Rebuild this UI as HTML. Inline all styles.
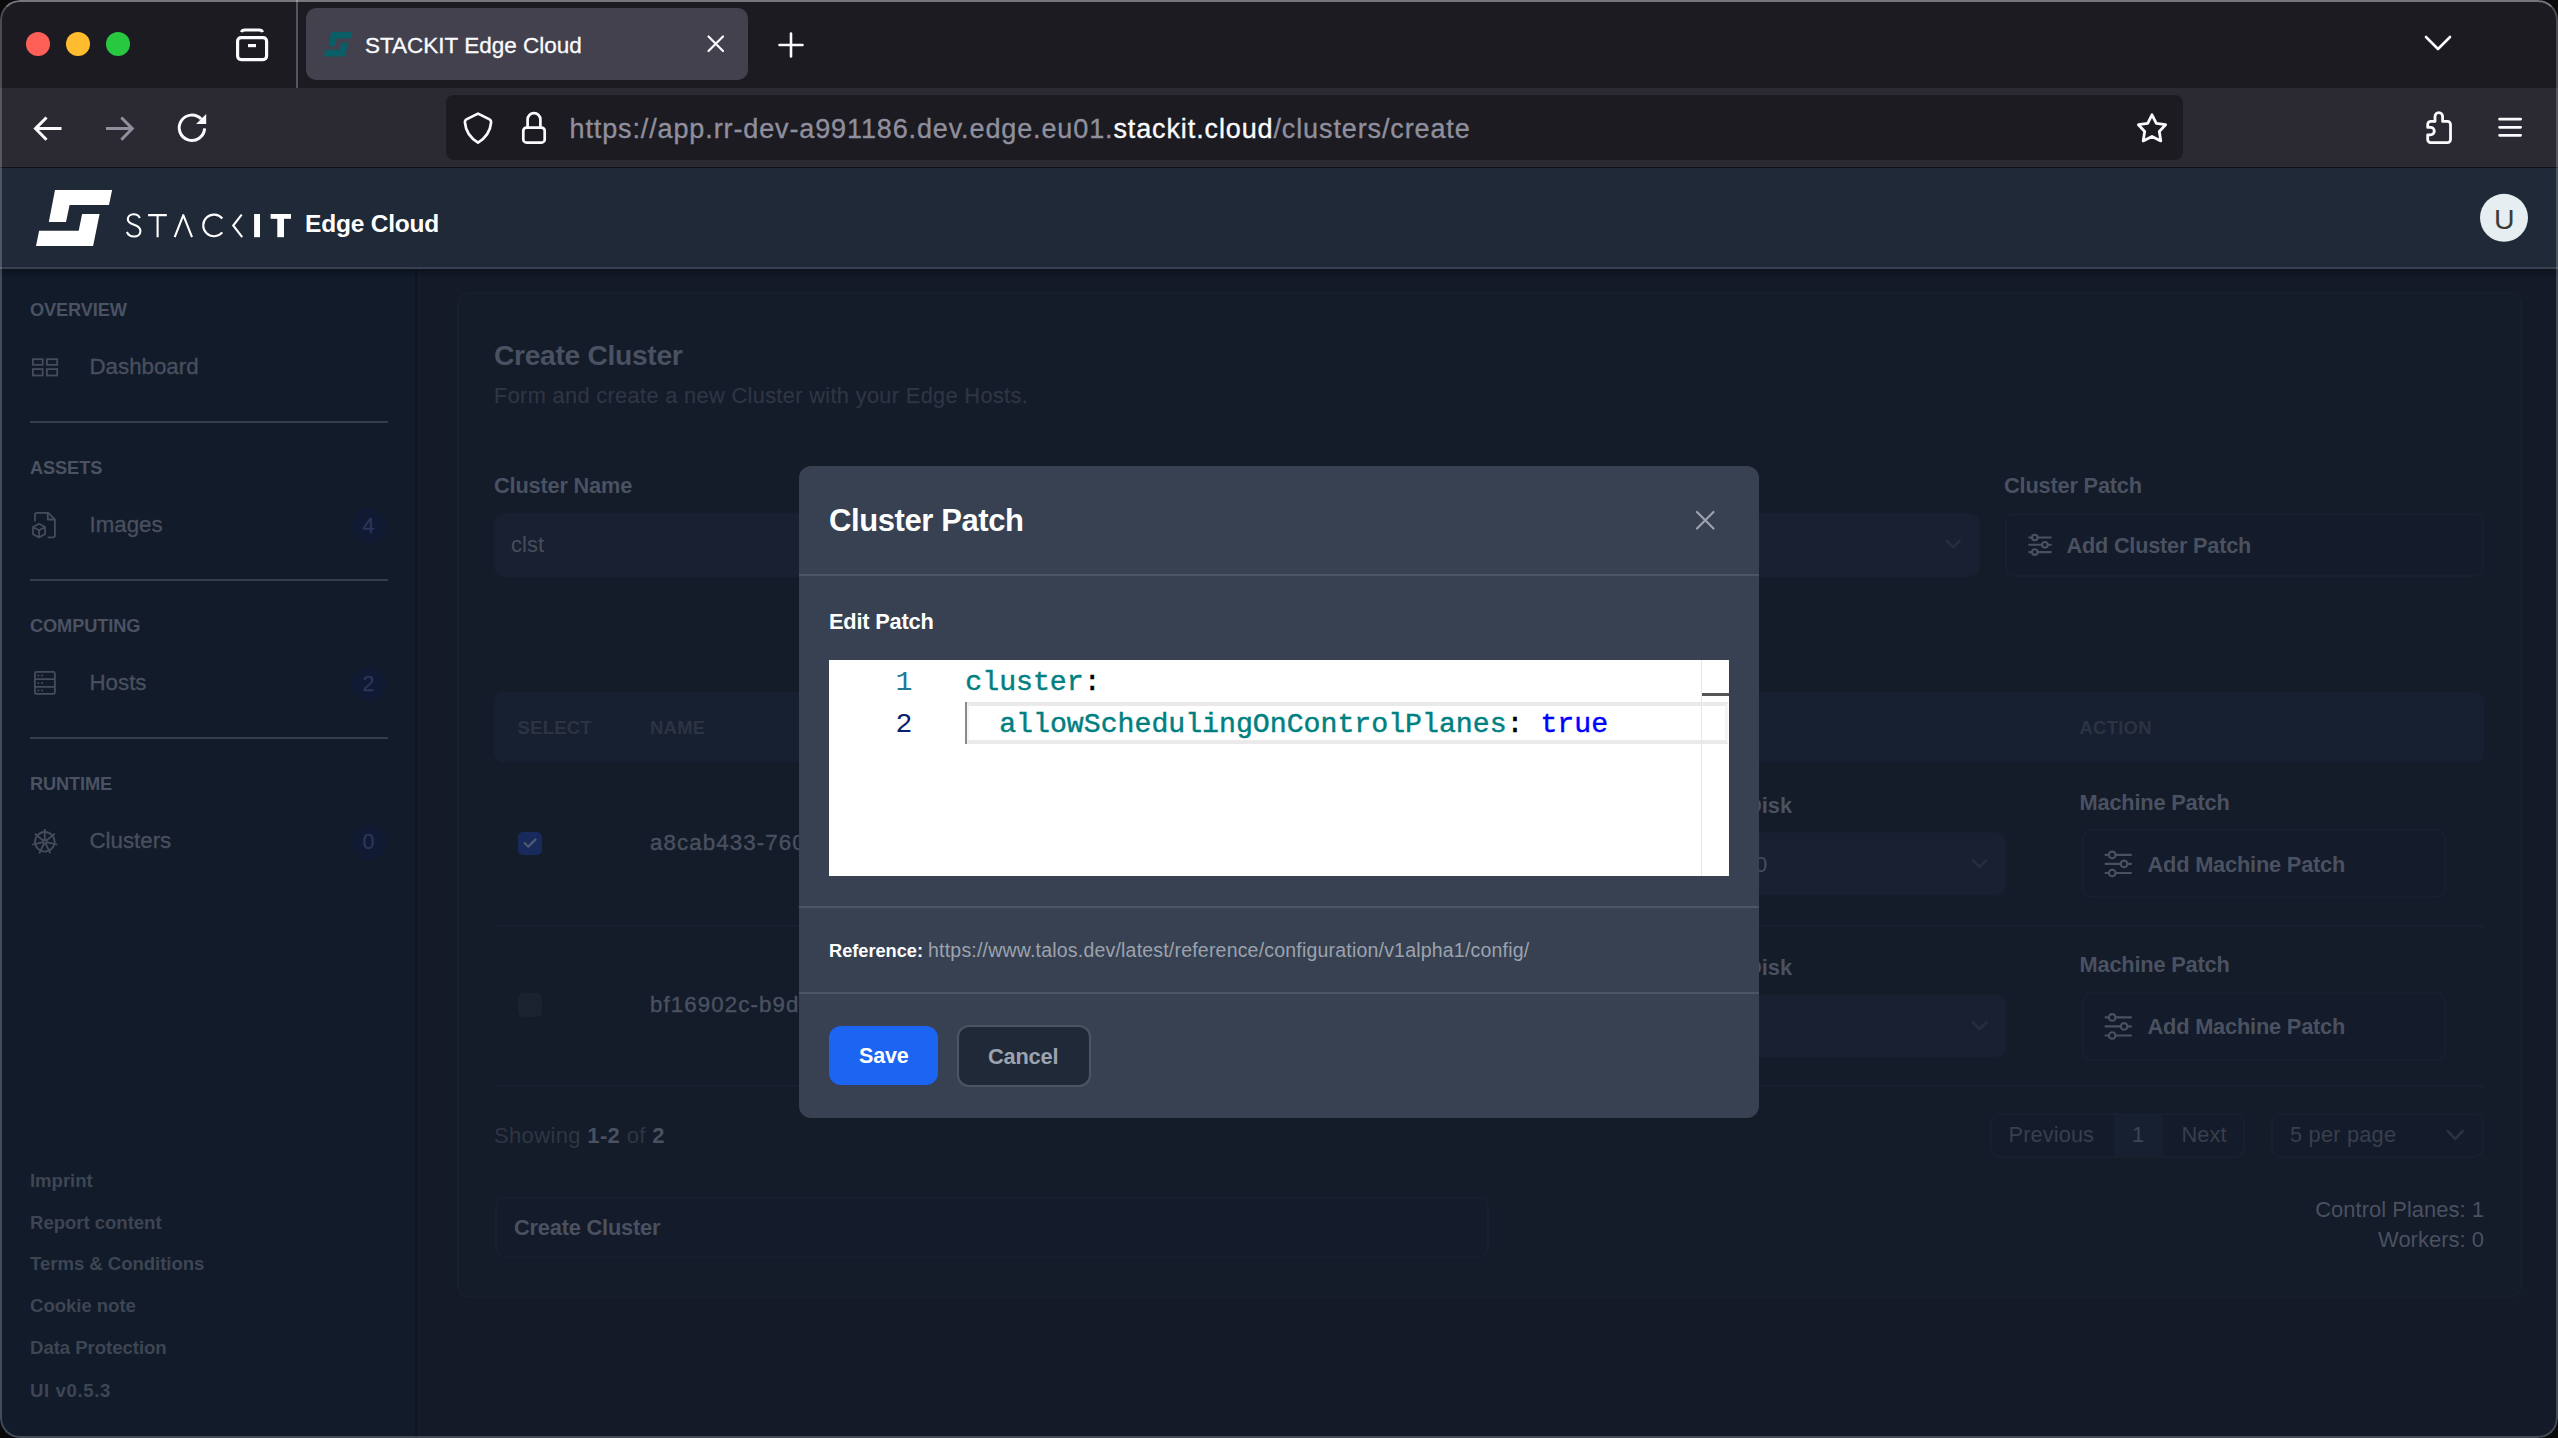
<!DOCTYPE html><html><head><meta charset="utf-8"><style>
*{margin:0;padding:0}
html,body{width:2558px;height:1438px;overflow:hidden;background:#0a0a0a}
#win{position:absolute;left:0;top:0;width:2558px;height:1438px;border-radius:20px;overflow:hidden;background:#111827}
.t{position:absolute;white-space:pre;}
.r{position:absolute}
.s{position:absolute;overflow:visible}
#frame{position:absolute;left:0;top:0;width:2558px;height:1438px;border-radius:20px;box-sizing:border-box;border:2px solid rgba(255,255,255,0.21);border-top-color:rgba(255,255,255,0.4);pointer-events:none}
</style></head><body><div id="win"><div class="r" style="left:0px;top:0px;width:2558px;height:88px;background:#1c1b22;"></div><div class="r" style="left:0px;top:88px;width:2558px;height:80px;background:#2b2a33;"></div><div class="r" style="left:0px;top:167px;width:2558px;height:1px;background:#0f0f14;"></div><svg class="s" style="left:0px;top:0px;" width="160" height="88" viewBox="0 0 160 88"><circle cx="38" cy="44" r="12" fill="#fe5f57"/><circle cx="78" cy="44" r="12" fill="#febc2e"/><circle cx="118" cy="44" r="12" fill="#28c840"/></svg><svg class="s" style="left:220px;top:20px;" width="60" height="50" viewBox="220 20 60 50"><rect x="237.6" y="37.6" width="29" height="22" rx="3.5" fill="none" stroke="#fbfbfe" stroke-width="3.2"/><path d="M241.5 32.2 Q242 30 245 30 L259 30 Q262 30 262.5 32.2" fill="none" stroke="#fbfbfe" stroke-width="3"/><rect x="248" y="44" width="8" height="3.2" fill="#fbfbfe"/></svg><div class="r" style="left:296px;top:0px;width:2px;height:88px;background:#55545c;"></div><div class="r" style="left:306px;top:8px;width:442px;height:72px;background:#42414d;border-radius:10px;"></div><svg class="s" style="left:323.5px;top:31.7px" width="28.5" height="24.5" viewBox="36 189.9 76.1 56.1" preserveAspectRatio="none"><polygon points="55,189.9 112.1,189.9 109,205 69.6,205 66,222 48.8,222" fill="#0a5e66"/><polygon points="82.1,213.9 99.6,213.9 93.1,246 36,246 39.1,230.8 78.7,230.8" fill="#0a5e66"/></svg><div class="t" style="left:365.00px;top:35.35px;font-size:22.5px;line-height:22.5px;color:#fbfbfe;font-weight:400;font-family:'Liberation Sans',sans-serif;-webkit-text-stroke:0.3px currentColor">STACKIT Edge Cloud</div><svg class="s" style="left:700px;top:28px;" width="32" height="32" viewBox="700 28 32 32"><path d="M708.5 36.5 L723 51 M723 36.5 L708.5 51" stroke="#fbfbfe" stroke-width="2.2" stroke-linecap="round"/></svg><svg class="s" style="left:770px;top:25px;" width="40" height="40" viewBox="770 25 40 40"><path d="M791 33.5 V56.5 M779.5 45 H802.5" stroke="#fbfbfe" stroke-width="2.6" stroke-linecap="round"/></svg><svg class="s" style="left:2415px;top:25px;" width="45" height="35" viewBox="2415 25 45 35"><path d="M2426 37 L2438 49 L2450 37" fill="none" stroke="#fbfbfe" stroke-width="2.6" stroke-linecap="round" stroke-linejoin="round"/></svg><svg class="s" style="left:25px;top:105px;" width="200" height="50" viewBox="25 105 200 50"><path d="M35.5 128.6 H61.5 M46.5 117.5 L35.5 128.6 L46.5 139.7" fill="none" stroke="#fbfbfe" stroke-width="3" stroke-linecap="butt" stroke-linejoin="miter"/><path d="M106 128.6 H132 M121.3 117.5 L132.3 128.6 L121.3 139.7" fill="none" stroke="#8f8f9d" stroke-width="3"/><path d="M204.6 128.4 A12.7 12.7 0 1 1 201.2 119.1" fill="none" stroke="#fbfbfe" stroke-width="3"/><polygon points="196.1,124 206.2,124 206.2,114" fill="#fbfbfe"/></svg><div class="r" style="left:446px;top:95px;width:1737px;height:65px;background:#1c1b22;border-radius:8px;"></div><svg class="s" style="left:455px;top:105px;" width="45" height="45" viewBox="455 105 45 45"><path d="M478 113.6 L489.6 119.4 Q491.3 120.3 491.1 122.3 Q490 135.2 478 142.6 Q466 135.2 464.9 122.3 Q464.7 120.3 466.4 119.4 Z" fill="none" stroke="#fbfbfe" stroke-width="2.7" stroke-linejoin="round"/></svg><svg class="s" style="left:515px;top:105px;" width="40" height="45" viewBox="515 105 40 45"><path d="M527.6 127.6 V119.6 A6.4 6.4 0 0 1 540.4 119.6 V127.6" fill="none" stroke="#fbfbfe" stroke-width="2.7"/><rect x="523.3" y="127.6" width="21.4" height="15" rx="3.2" fill="none" stroke="#fbfbfe" stroke-width="2.7"/></svg><div class="t" style="left:569.50px;top:115.74px;font-size:27px;line-height:27px;color:#8f8f9d;font-weight:400;letter-spacing:0.88px;font-family:'Liberation Sans',sans-serif;-webkit-text-stroke:0.35px currentColor"><span style="color:#8f8f9d">https://app.rr-dev-a991186.dev.edge.eu01.</span><span style="color:#fbfbfe">stackit.cloud</span><span style="color:#8f8f9d">/clusters/create</span></div><svg class="s" style="left:2125px;top:100px;" width="55" height="55" viewBox="2125 100 55 55"><path d="M2152 114.8 L2156.3 123.3 L2165.6 124.7 L2159.3 131.5 L2160.8 140.9 L2152 136.5 L2143.2 140.9 L2144.7 131.5 L2138.4 124.7 L2147.7 123.3 Z" fill="none" stroke="#fbfbfe" stroke-width="2.8" stroke-linejoin="round"/></svg><svg class="s" style="left:2415px;top:100px;" width="50" height="55" viewBox="2415 100 50 55"><path d="M2435 121.4 V116.5 A3.8 3.8 0 0 1 2442.6 116.5 V121.4 H2447.5 A3 3 0 0 1 2450.5 124.4 V139.6 A3 3 0 0 1 2447.5 142.6 H2430.7 A3 3 0 0 1 2427.7 139.6 V134.8 H2430.6 A3.7 3.7 0 0 0 2430.6 127.4 H2427.7 V124.4 A3 3 0 0 1 2430.7 121.4 Z" fill="none" stroke="#fbfbfe" stroke-width="2.8" stroke-linejoin="round"/></svg><svg class="s" style="left:2490px;top:105px;" width="40" height="45" viewBox="2490 105 40 45"><path d="M2499.6 119.2 H2520.6 M2499.6 127.3 H2520.6 M2499.6 135.3 H2520.6" stroke="#fbfbfe" stroke-width="2.8" stroke-linecap="round"/></svg><div class="r" style="left:0px;top:168px;width:2558px;height:99px;background:#1f2937;"></div><div class="r" style="left:0px;top:267px;width:2558px;height:2px;background:#374151;"></div><svg class="s" style="left:30px;top:185px;" width="90" height="65" viewBox="30 185 90 65"><polygon points="55,189.9 112.1,189.9 109,205 69.6,205 66,222 48.8,222" fill="#ffffff"/><polygon points="82.1,213.9 99.6,213.9 93.1,246 36,246 39.1,230.8 78.7,230.8" fill="#ffffff"/></svg><svg class="s" style="left:120px;top:205px;" width="180" height="40" viewBox="120 205 180 40"><g fill="none" stroke="#ffffff" stroke-width="2.1"><path d="M139.8 218 C138.5 215 136 214.3 133.6 214.3 C130 214.3 127.8 216.5 127.8 219.3 C127.8 222.6 130.8 223.8 134 224.8 C137.6 225.9 140.4 227.3 140.4 231.2 C140.4 234.5 137.6 236.5 133.9 236.5 C130.8 236.5 128.2 235 126.9 232"/><path d="M148.1 215.1 H166.8 M157.6 215.1 V237.2"/><path d="M174.7 237.2 L183.3 215.2 L192 237.2" stroke-linejoin="round"/><path d="M222.3 218.5 A10.8 10.8 0 1 0 222.3 232.4"/><path d="M241.7 214.6 L233.2 225.5 L242.2 237.1"/></g><rect x="254.1" y="214" width="5.9" height="23.2" fill="#ffffff"/><rect x="270.6" y="214" width="20.4" height="4.8" fill="#ffffff"/><rect x="277.3" y="214" width="6.7" height="23.2" fill="#ffffff"/></svg><div class="t" style="left:305.00px;top:212.06px;font-size:24.5px;line-height:24.5px;color:#ffffff;font-weight:700;letter-spacing:-0.2px;font-family:'Liberation Sans',sans-serif;">Edge Cloud</div><svg class="s" style="left:2470px;top:185px;" width="70" height="70" viewBox="2470 185 70 70"><circle cx="2504" cy="217.8" r="24" fill="#e6eef1"/></svg><div class="t" style="left:2494.00px;top:205.27px;font-size:28.5px;line-height:28.5px;color:#3b3b3b;font-weight:400;font-family:'Liberation Sans',sans-serif;">U</div><div class="r" style="left:0px;top:269px;width:418px;height:1169px;background:#111b2a;"></div><div class="r" style="left:415px;top:269px;width:3px;height:1169px;background:#0f1723;"></div><div class="r" style="left:418px;top:269px;width:2px;height:1169px;background:#161d2a;"></div><div class="t" style="left:30.00px;top:300.69px;font-size:18.2px;line-height:18.2px;color:#4b5262;font-weight:700;letter-spacing:-0.1px;font-family:'Liberation Sans',sans-serif;">OVERVIEW</div><div class="t" style="left:30.00px;top:459.09px;font-size:18.2px;line-height:18.2px;color:#4b5262;font-weight:700;letter-spacing:-0.1px;font-family:'Liberation Sans',sans-serif;">ASSETS</div><div class="t" style="left:30.00px;top:616.79px;font-size:18.2px;line-height:18.2px;color:#4b5262;font-weight:700;letter-spacing:-0.1px;font-family:'Liberation Sans',sans-serif;">COMPUTING</div><div class="t" style="left:30.00px;top:774.79px;font-size:18.2px;line-height:18.2px;color:#4b5262;font-weight:700;letter-spacing:-0.1px;font-family:'Liberation Sans',sans-serif;">RUNTIME</div><div class="t" style="left:89.50px;top:356.12px;font-size:22.3px;line-height:22.3px;color:#494f5d;font-weight:400;font-family:'Liberation Sans',sans-serif;-webkit-text-stroke:0.35px currentColor">Dashboard</div><div class="t" style="left:89.50px;top:513.62px;font-size:22.3px;line-height:22.3px;color:#494f5d;font-weight:400;font-family:'Liberation Sans',sans-serif;-webkit-text-stroke:0.35px currentColor">Images</div><div class="t" style="left:89.50px;top:671.62px;font-size:22.3px;line-height:22.3px;color:#494f5d;font-weight:400;font-family:'Liberation Sans',sans-serif;-webkit-text-stroke:0.35px currentColor">Hosts</div><div class="t" style="left:89.50px;top:829.62px;font-size:22.3px;line-height:22.3px;color:#494f5d;font-weight:400;font-family:'Liberation Sans',sans-serif;-webkit-text-stroke:0.35px currentColor">Clusters</div><div class="r" style="left:30px;top:421px;width:358px;height:2px;background:#353c4a;"></div><div class="r" style="left:30px;top:579px;width:358px;height:2px;background:#353c4a;"></div><div class="r" style="left:30px;top:737px;width:358px;height:2px;background:#353c4a;"></div><svg class="s" style="left:345px;top:501px;" width="50" height="50" viewBox="345 501 50 50"><circle cx="369" cy="526" r="17.5" fill="#111a33"/></svg><div class="t" style="left:362.50px;top:515.60px;font-size:21.5px;line-height:21.5px;color:#2a375a;font-weight:400;font-family:'Liberation Sans',sans-serif;-webkit-text-stroke:0.3px currentColor">4</div><svg class="s" style="left:345px;top:659px;" width="50" height="50" viewBox="345 659 50 50"><circle cx="369" cy="684" r="17.5" fill="#111a33"/></svg><div class="t" style="left:362.50px;top:673.60px;font-size:21.5px;line-height:21.5px;color:#2a375a;font-weight:400;font-family:'Liberation Sans',sans-serif;-webkit-text-stroke:0.3px currentColor">2</div><svg class="s" style="left:345px;top:817px;" width="50" height="50" viewBox="345 817 50 50"><circle cx="369" cy="842" r="17.5" fill="#111a33"/></svg><div class="t" style="left:362.50px;top:831.60px;font-size:21.5px;line-height:21.5px;color:#2a375a;font-weight:400;font-family:'Liberation Sans',sans-serif;-webkit-text-stroke:0.3px currentColor">0</div><svg class="s" style="left:25px;top:350px;" width="45" height="35" viewBox="25 350 45 35"><g stroke="#454c5a" stroke-width="1.8" fill="none"><rect x="32.9" y="359.2" width="9.8" height="5.6"/><rect x="46.9" y="359.2" width="10.3" height="5.6"/><rect x="32.9" y="369.1" width="9.8" height="6.4"/><rect x="46.9" y="369.1" width="10.3" height="6.4"/></g></svg><svg class="s" style="left:25px;top:505px;" width="40" height="40" viewBox="25 505 40 40"><g stroke="#454c5a" stroke-width="1.8" fill="none" stroke-linejoin="round"><path d="M35 521.5 V514.5 Q35 512.8 36.7 512.8 H48.3 L54.9 519.5 V535.6 Q54.9 537.3 53.2 537.3 H47.6"/><path d="M47.8 512.8 V519.5 H54.9"/><path d="M39 523.8 L45 527 V534.2 L39 537.4 L33 534.2 V527 Z M33 527 L39 530.2 L45 527 M39 530.2 V537.4"/></g></svg><svg class="s" style="left:25px;top:660px;" width="40" height="45" viewBox="25 660 40 45"><g stroke="#454c5a" stroke-width="1.8" fill="none"><rect x="34.9" y="671.9" width="20" height="22" rx="2"/><path d="M34.9 679.2 H54.9 M34.9 686.9 H54.9"/></g><g fill="#454c5a"><circle cx="38.4" cy="675.5" r="1"/><circle cx="42" cy="675.5" r="1"/><circle cx="38.4" cy="683" r="1"/><circle cx="42" cy="683" r="1"/><circle cx="38.4" cy="690.5" r="1"/><circle cx="42" cy="690.5" r="1"/></g></svg><svg class="s" style="left:25px;top:820px;" width="40" height="45" viewBox="25 820 40 45"><g stroke="#454c5a" stroke-width="1.8" fill="none"><circle cx="44.8" cy="841.8" r="9.8"/><circle cx="44.8" cy="841.8" r="1.8"/><path d="M44.80 840.20 L44.80 829.00 M46.05 840.80 L54.81 833.82 M46.36 842.16 L57.28 844.65 M45.49 843.24 L50.35 853.33 M44.11 843.24 L39.25 853.33 M43.24 842.16 L32.32 844.65 M43.55 840.80 L34.79 833.82 "/></g></svg><div class="t" style="left:30.00px;top:1171.65px;font-size:18.6px;line-height:18.6px;color:#3e4553;font-weight:700;letter-spacing:-0.05px;font-family:'Liberation Sans',sans-serif;">Imprint</div><div class="t" style="left:30.00px;top:1213.55px;font-size:18.6px;line-height:18.6px;color:#3e4553;font-weight:700;letter-spacing:-0.05px;font-family:'Liberation Sans',sans-serif;">Report content</div><div class="t" style="left:30.00px;top:1255.25px;font-size:18.6px;line-height:18.6px;color:#3e4553;font-weight:700;letter-spacing:-0.05px;font-family:'Liberation Sans',sans-serif;">Terms &amp; Conditions</div><div class="t" style="left:30.00px;top:1296.95px;font-size:18.6px;line-height:18.6px;color:#3e4553;font-weight:700;letter-spacing:-0.05px;font-family:'Liberation Sans',sans-serif;">Cookie note</div><div class="t" style="left:30.00px;top:1339.25px;font-size:18.6px;line-height:18.6px;color:#3e4553;font-weight:700;letter-spacing:-0.05px;font-family:'Liberation Sans',sans-serif;">Data Protection</div><div class="t" style="left:30.00px;top:1381.65px;font-size:18.6px;line-height:18.6px;color:#3e4553;font-weight:700;letter-spacing:0.6px;font-family:'Liberation Sans',sans-serif;">UI v0.5.3</div><div class="r" style="left:420px;top:269px;width:2138px;height:1169px;background:#141a28;"></div><div class="r" style="left:457px;top:292px;width:2065px;height:1006px;background:#141b29;border-radius:12px;border:2px solid #171e2c;box-sizing:border-box;"></div><div class="t" style="left:494.00px;top:341.12px;font-size:28.2px;line-height:28.2px;color:#4a5161;font-weight:700;letter-spacing:-0.3px;font-family:'Liberation Sans',sans-serif;">Create Cluster</div><div class="t" style="left:494.00px;top:385.24px;font-size:21.8px;line-height:21.8px;color:#2f3543;font-weight:400;letter-spacing:0.33px;font-family:'Liberation Sans',sans-serif;-webkit-text-stroke:0.25px currentColor">Form and create a new Cluster with your Edge Hosts.</div><div class="t" style="left:494.00px;top:475.44px;font-size:21.8px;line-height:21.8px;color:#4a5161;font-weight:700;letter-spacing:-0.2px;font-family:'Liberation Sans',sans-serif;">Cluster Name</div><div class="r" style="left:494px;top:513px;width:406px;height:64px;background:#182031;border-radius:10px;border:2px solid #182030;box-sizing:border-box;"></div><div class="t" style="left:511.00px;top:534.37px;font-size:22px;line-height:22px;color:#474e5b;font-weight:400;font-family:'Liberation Sans',sans-serif;">clst</div><div class="r" style="left:1700px;top:513px;width:280px;height:64px;background:#182031;border-radius:10px;border:2px solid #182030;box-sizing:border-box;"></div><svg class="s" style="left:1940px;top:531px;" width="26" height="26" viewBox="1940 531 26 26"><path d="M1946.8 540.8 L1953.3 547.2 L1959.8 540.8" fill="none" stroke="#262e3c" stroke-width="2.6" stroke-linecap="round" stroke-linejoin="round"/></svg><div class="t" style="left:2004.00px;top:475.24px;font-size:21.8px;line-height:21.8px;color:#4a5161;font-weight:700;letter-spacing:-0.2px;font-family:'Liberation Sans',sans-serif;">Cluster Patch</div><div class="r" style="left:2005px;top:513px;width:479px;height:64px;background:#141b2a;border-radius:10px;border:2px solid #182030;box-sizing:border-box;"></div><svg class="s" style="left:2024px;top:530px;" width="30" height="29" viewBox="2024 530 30 29"><g fill="none" stroke="#4a5160" stroke-width="2.1" stroke-linecap="round"><path d="M2029.2 537.5 H2032.0 M2037.6 537.5 H2050.8" /><circle cx="2034.8" cy="537.5" r="2.8"/><path d="M2029.2 544.8 H2042.1 M2047.7 544.8 H2050.8" /><circle cx="2044.9" cy="544.8" r="2.8"/><path d="M2029.2 552.1 H2032.0 M2037.6 552.1 H2050.8" /><circle cx="2034.8" cy="552.1" r="2.8"/></g></svg><div class="t" style="left:2066.50px;top:535.03px;font-size:21.7px;line-height:21.7px;color:#4a5160;font-weight:700;letter-spacing:-0.2px;font-family:'Liberation Sans',sans-serif;">Add Cluster Patch</div><div class="r" style="left:494px;top:692px;width:1990px;height:70px;background:#172031;border-radius:8px;"></div><div class="t" style="left:517.50px;top:718.72px;font-size:18.4px;line-height:18.4px;color:#2c3341;font-weight:700;letter-spacing:0.3px;font-family:'Liberation Sans',sans-serif;">SELECT</div><div class="t" style="left:650.00px;top:718.72px;font-size:18.4px;line-height:18.4px;color:#2c3341;font-weight:700;letter-spacing:0.3px;font-family:'Liberation Sans',sans-serif;">NAME</div><div class="t" style="left:2079.50px;top:718.72px;font-size:18.4px;line-height:18.4px;color:#2c3341;font-weight:700;letter-spacing:0.3px;font-family:'Liberation Sans',sans-serif;">ACTION</div><div class="r" style="left:494px;top:925px;width:1990px;height:2px;background:#182030;"></div><div class="r" style="left:494px;top:1085px;width:1990px;height:2px;background:#182030;"></div><div class="r" style="left:518px;top:831.5px;width:24px;height:23.0px;background:#182a5c;border-radius:5px;"></div><svg class="s" style="left:518px;top:831px;" width="24" height="24" viewBox="518 831 24 24"><path d="M524.5 843 L528.3 846.6 L535.5 839.4" fill="none" stroke="#4d5970" stroke-width="2.2" stroke-linecap="round" stroke-linejoin="round"/></svg><div class="t" style="left:650.00px;top:831.72px;font-size:22.3px;line-height:22.3px;color:#4a5160;font-weight:400;letter-spacing:1.1px;font-family:'Liberation Sans',sans-serif;-webkit-text-stroke:0.4px currentColor">a8cab433-7605-4d2e-9b1a</div><div class="t" style="left:1746.00px;top:794.74px;font-size:21.8px;line-height:21.8px;color:#4a5161;font-weight:700;font-family:'Liberation Sans',sans-serif;">Disk</div><div class="r" style="left:1700px;top:832px;width:307px;height:63px;background:#182031;border-radius:10px;border:2px solid #182030;box-sizing:border-box;"></div><div class="t" style="left:1755.00px;top:854.37px;font-size:22px;line-height:22px;color:#474e5b;font-weight:400;font-family:'Liberation Sans',sans-serif;">0</div><svg class="s" style="left:1966px;top:850px;" width="27" height="27" viewBox="1966 850 27 27"><path d="M1972.8 860.2 L1979.6 867.0 L1986.3 860.2" fill="none" stroke="#262e3c" stroke-width="2.6" stroke-linecap="round" stroke-linejoin="round"/></svg><div class="t" style="left:2079.50px;top:792.44px;font-size:21.8px;line-height:21.8px;color:#4a5161;font-weight:700;letter-spacing:-0.2px;font-family:'Liberation Sans',sans-serif;">Machine Patch</div><div class="r" style="left:2082px;top:829px;width:364px;height:69px;background:#141b2a;border-radius:10px;border:2px solid #182030;box-sizing:border-box;"></div><svg class="s" style="left:2101px;top:846px;" width="34" height="35" viewBox="2101 846 34 35"><g fill="none" stroke="#4a5160" stroke-width="2.1" stroke-linecap="round"><path d="M2105.5 854.9 H2108.8 M2115.5 854.9 H2131.0" /><circle cx="2112.2" cy="854.9" r="3.3"/><path d="M2105.5 863.9 H2120.8 M2127.4 863.9 H2131.0" /><circle cx="2124.1" cy="863.9" r="3.3"/><path d="M2105.5 873.0 H2108.8 M2115.5 873.0 H2131.0" /><circle cx="2112.2" cy="873.0" r="3.3"/></g></svg><div class="t" style="left:2147.50px;top:853.64px;font-size:21.8px;line-height:21.8px;color:#4a5160;font-weight:700;letter-spacing:-0.2px;font-family:'Liberation Sans',sans-serif;">Add Machine Patch</div><div class="r" style="left:518px;top:993px;width:24px;height:23.5px;background:#1a2230;border-radius:5px;"></div><div class="t" style="left:650.00px;top:994.32px;font-size:22.3px;line-height:22.3px;color:#4a5160;font-weight:400;letter-spacing:1.1px;font-family:'Liberation Sans',sans-serif;-webkit-text-stroke:0.4px currentColor">bf16902c-b9d4-4e7a-8c21</div><div class="t" style="left:1746.00px;top:956.74px;font-size:21.8px;line-height:21.8px;color:#4a5161;font-weight:700;font-family:'Liberation Sans',sans-serif;">Disk</div><div class="r" style="left:1700px;top:994px;width:307px;height:63px;background:#182031;border-radius:10px;border:2px solid #182030;box-sizing:border-box;"></div><svg class="s" style="left:1966px;top:1012px;" width="27" height="27" viewBox="1966 1012 27 27"><path d="M1972.8 1022.2 L1979.6 1029.0 L1986.3 1022.2" fill="none" stroke="#262e3c" stroke-width="2.6" stroke-linecap="round" stroke-linejoin="round"/></svg><div class="t" style="left:2079.50px;top:953.54px;font-size:21.8px;line-height:21.8px;color:#4a5161;font-weight:700;letter-spacing:-0.2px;font-family:'Liberation Sans',sans-serif;">Machine Patch</div><div class="r" style="left:2082px;top:992px;width:364px;height:69px;background:#141b2a;border-radius:10px;border:2px solid #182030;box-sizing:border-box;"></div><svg class="s" style="left:2101px;top:1009px;" width="34" height="35" viewBox="2101 1009 34 35"><g fill="none" stroke="#4a5160" stroke-width="2.1" stroke-linecap="round"><path d="M2105.5 1017.4 H2108.8 M2115.5 1017.4 H2131.0" /><circle cx="2112.2" cy="1017.4" r="3.3"/><path d="M2105.5 1026.4 H2120.8 M2127.4 1026.4 H2131.0" /><circle cx="2124.1" cy="1026.4" r="3.3"/><path d="M2105.5 1035.5 H2108.8 M2115.5 1035.5 H2131.0" /><circle cx="2112.2" cy="1035.5" r="3.3"/></g></svg><div class="t" style="left:2147.50px;top:1016.04px;font-size:21.8px;line-height:21.8px;color:#4a5160;font-weight:700;letter-spacing:-0.2px;font-family:'Liberation Sans',sans-serif;">Add Machine Patch</div><div class="t" style="left:494.00px;top:1124.97px;font-size:22px;line-height:22px;color:#2f3643;font-weight:400;letter-spacing:0.35px;font-family:'Liberation Sans',sans-serif;"><span>Showing </span><b style="color:#4a5160">1-2</b><span> of </span><b style="color:#4a5160">2</b></div><div class="r" style="left:1990px;top:1113px;width:255px;height:45px;background:#141b2a;border-radius:10px;border:2px solid #182030;box-sizing:border-box;"></div><div class="r" style="left:2114px;top:1115px;width:49px;height:41px;background:#172031;"></div><div class="t" style="left:2008.50px;top:1124.24px;font-size:21.8px;line-height:21.8px;color:#383f4d;font-weight:400;letter-spacing:0.1px;font-family:'Liberation Sans',sans-serif;">Previous</div><div class="t" style="left:2132.00px;top:1124.24px;font-size:21.8px;line-height:21.8px;color:#3f4654;font-weight:400;font-family:'Liberation Sans',sans-serif;">1</div><div class="t" style="left:2181.50px;top:1124.24px;font-size:21.8px;line-height:21.8px;color:#383f4d;font-weight:400;letter-spacing:0.1px;font-family:'Liberation Sans',sans-serif;">Next</div><div class="r" style="left:2271px;top:1113px;width:213px;height:45px;background:#141b2a;border-radius:10px;border:2px solid #182030;box-sizing:border-box;"></div><div class="t" style="left:2290.00px;top:1124.24px;font-size:21.8px;line-height:21.8px;color:#383f4d;font-weight:400;letter-spacing:0.2px;font-family:'Liberation Sans',sans-serif;">5 per page</div><svg class="s" style="left:2440px;top:1120px;" width="30" height="30" viewBox="2440 1120 30 30"><path d="M2447.7 1131.2 L2455.2 1138.8 L2462.7 1131.2" fill="none" stroke="#2c3442" stroke-width="2.6" stroke-linecap="round" stroke-linejoin="round"/></svg><div class="r" style="left:495px;top:1197px;width:994px;height:61px;background:#141b2a;border-radius:10px;border:2px solid #182030;box-sizing:border-box;"></div><div class="t" style="left:514.00px;top:1216.94px;font-size:21.8px;line-height:21.8px;color:#4a5160;font-weight:700;letter-spacing:-0.2px;font-family:'Liberation Sans',sans-serif;">Create Cluster</div><div class="t" style="left:2314.00px;top:1199.36px;font-size:21.9px;line-height:21.9px;color:#4a5160;font-weight:400;letter-spacing:0.05px;font-family:'Liberation Sans',sans-serif;width:170px;text-align:right">Control Planes: 1</div><div class="t" style="left:2314.00px;top:1229.46px;font-size:21.9px;line-height:21.9px;color:#4a5160;font-weight:400;letter-spacing:0.05px;font-family:'Liberation Sans',sans-serif;width:170px;text-align:right">Workers: 0</div><div class="r" style="left:0;top:269px;width:2558px;height:10px;background:linear-gradient(rgba(0,0,0,0.28),rgba(0,0,0,0))"></div><div class="r" style="left:799px;top:466px;width:960px;height:652px;background:#374151;border-radius:12px;"></div><div class="t" style="left:829.00px;top:504.95px;font-size:31px;line-height:31px;color:#ffffff;font-weight:700;letter-spacing:-0.4px;font-family:'Liberation Sans',sans-serif;">Cluster Patch</div><svg class="s" style="left:1690px;top:505px;" width="30" height="30" viewBox="1690 505 30 30"><path d="M1697 512 L1713.5 528.5 M1713.5 512 L1697 528.5" stroke="#9ca3af" stroke-width="2.2" stroke-linecap="round"/></svg><div class="r" style="left:799px;top:574px;width:960px;height:2px;background:#4b5563;"></div><div class="t" style="left:829.00px;top:610.54px;font-size:21.8px;line-height:21.8px;color:#ffffff;font-weight:700;letter-spacing:-0.2px;font-family:'Liberation Sans',sans-serif;">Edit Patch</div><div class="r" style="left:829px;top:660px;width:900px;height:216px;background:#ffffff;"></div><div class="r" style="left:966px;top:702px;width:762px;height:42px;background:transparent;border:4px solid #eaeaea;box-sizing:border-box;border-left:3px solid #f4f4f4;border-right:3px solid #f4f4f4"></div><div class="r" style="left:965px;top:702px;width:2px;height:42px;background:#8a8a8a;"></div><div class="r" style="left:1701px;top:660px;width:1px;height:216px;background:#e8e8e8;"></div><div class="r" style="left:1702px;top:693px;width:27px;height:3px;background:#555555;"></div><div class="t" style="left:895.50px;top:669.40px;font-size:28.2px;line-height:28.2px;color:#237893;font-weight:400;font-family:'Liberation Mono',sans-serif;">1</div><div class="t" style="left:895.50px;top:711.40px;font-size:28.2px;line-height:28.2px;color:#0b216f;font-weight:400;font-family:'Liberation Mono',sans-serif;">2</div><div class="t" style="left:965.30px;top:669.40px;font-size:28.2px;line-height:28.2px;color:#008080;font-weight:400;font-family:'Liberation Mono',sans-serif;white-space:pre;-webkit-text-stroke:0.45px currentColor"><span style="color:#008080">cluster</span><span style="color:#000">:</span></div><div class="t" style="left:965.30px;top:711.40px;font-size:28.2px;line-height:28.2px;color:#008080;font-weight:400;font-family:'Liberation Mono',sans-serif;white-space:pre;-webkit-text-stroke:0.45px currentColor"><span>  </span><span style="color:#008080">allowSchedulingOnControlPlanes</span><span style="color:#000">: </span><span style="color:#0000ff">true</span></div><div class="r" style="left:799px;top:906px;width:960px;height:2px;background:#4b5563;"></div><div class="t" style="left:829.00px;top:941.39px;font-size:18.2px;line-height:18.2px;color:#fff;font-weight:700;font-family:'Liberation Sans',sans-serif;"><b style="color:#fff">Reference:</b> <span style="color:#9ca3af;font-weight:400;letter-spacing:0.2px;font-size:19.5px">https://www.talos.dev/latest/reference/configuration/v1alpha1/config/</span></div><div class="r" style="left:799px;top:992px;width:960px;height:2px;background:#4b5563;"></div><div class="r" style="left:829px;top:1026px;width:109px;height:59px;background:#1c64f2;border-radius:12px;"></div><div class="t" style="left:859.00px;top:1046.30px;font-size:21.5px;line-height:21.5px;color:#ffffff;font-weight:700;letter-spacing:-0.2px;font-family:'Liberation Sans',sans-serif;">Save</div><div class="r" style="left:957px;top:1025px;width:134px;height:62px;background:#1f2937;border-radius:12px;border:2px solid #4b5563;box-sizing:border-box;"></div><div class="t" style="left:988.00px;top:1046.04px;font-size:21.8px;line-height:21.8px;color:#9ca3af;font-weight:700;letter-spacing:-0.2px;font-family:'Liberation Sans',sans-serif;">Cancel</div><div id="frame"></div></div></body></html>
